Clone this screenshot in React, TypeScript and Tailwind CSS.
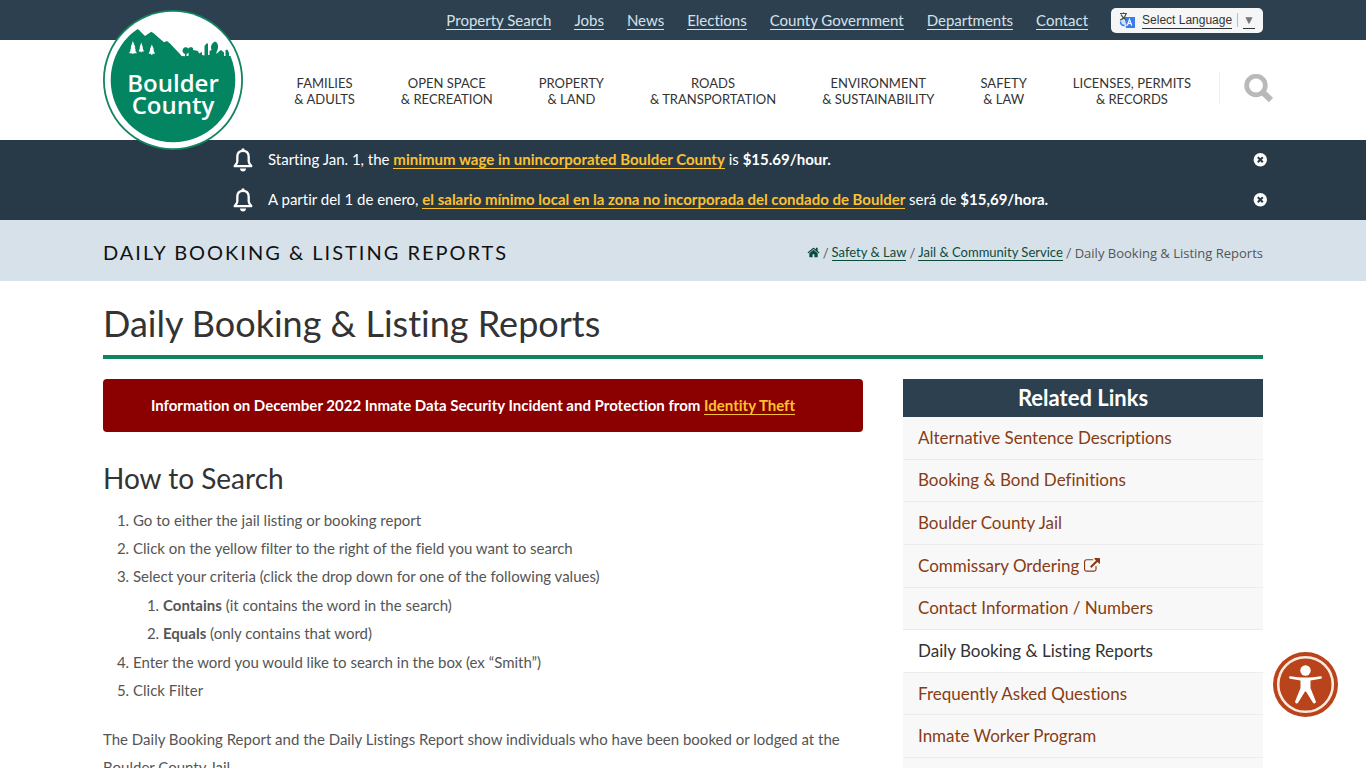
import type { ReactNode } from "react";

const utilityLinks = [
  "Property Search",
  "Jobs",
  "News",
  "Elections",
  "County Government",
  "Departments",
  "Contact",
];

const navItems: [string, string][] = [
  ["Families", "& Adults"],
  ["Open Space", "& Recreation"],
  ["Property", "& Land"],
  ["Roads", "& Transportation"],
  ["Environment", "& Sustainability"],
  ["Safety", "& Law"],
  ["Licenses, Permits", "& Records"],
];

const relatedLinks = [
  { label: "Alternative Sentence Descriptions" },
  { label: "Booking & Bond Definitions" },
  { label: "Boulder County Jail" },
  { label: "Commissary Ordering", external: true },
  { label: "Contact Information / Numbers" },
  { label: "Daily Booking & Listing Reports", current: true },
  { label: "Frequently Asked Questions" },
  { label: "Inmate Worker Program" },
];

function Container({ children, className = "" }: { children: ReactNode; className?: string }) {
  return <div className={`mx-auto w-full max-w-[1160px] ${className}`}>{children}</div>;
}

function Logo() {
  return (
    <svg viewBox="0 0 140 140" className="block size-[140px]" role="img" aria-label="Boulder County">
      <circle cx="70" cy="70" r="70" fill="#128462" />
      <circle cx="70" cy="70" r="68.2" fill="#fff" />
      <clipPath id="seal">
        <circle cx="70" cy="70" r="62.3" />
      </clipPath>
      <g clipPath="url(#seal)">
        <path
          fill="#048562"
          d="M0 40 L16 31 L22 27 L27 23 L29 23 L34.3 19 L36 20 L42 26 L48.3 21.7 L51 23.5 L56 28 L61 32.3 L64 31 L67 33.5 L76.5 43.5 L78.7 46 L82 46.2 L82 44 A3.2 3.4 0 1 1 83.5 44 L83.5 46 L85.5 46 L85.5 38 L88 37 L90 38 L90 40 L95 41 L96 43.5 L99 42 L99 45 L101.5 45.5 L101.5 36 L104 33 L105 34 L105 45 L106.5 45 L106.5 41 L108.5 40 C107 36 109 33 112 31.5 C115.5 33 116 38 113.5 42 L113.5 44 L116.5 41 L118 40 L121 42.5 L121 46 L122.5 46 L122.5 40 L126 39 L126 46 L140 46 L140 140 L0 140 Z"
        />
      </g>
      <g fill="#fff">
        <path d="M29.8 31 L32.4 37.5 L31.5 37.5 L33 40.3 L32 40.3 L34 43.2 L30.4 43.2 L30.4 44 L29.2 44 L29.2 43.2 L26 43.2 L27.8 40.3 L27 40.3 L28.4 37.5 L27.7 37.5 Z" />
        <path d="M38.2 32.5 L40 37.5 L39.4 37.5 L41 41.5 L38.8 41.5 L38.8 42.3 L37.7 42.3 L37.7 41.5 L35.6 41.5 L37.2 37.5 L36.6 37.5 Z" />
        <path d="M48.8 34.5 L51 39.5 L50.2 39.5 L52 43.7 L49.4 43.7 L49.4 45 L48.2 45 L48.2 43.7 L45.6 43.7 L47.4 39.5 L46.8 39.5 Z" />
      </g>
      <g fill="#fff" textAnchor="middle" className="font-['Open_Sans',sans-serif] text-[24px] font-semibold">
        <text x="70" y="82">Boulder</text>
        <text x="70" y="104">County</text>
      </g>
    </svg>
  );
}

function TranslateIcon() {
  return (
    <svg viewBox="0 0 16 16" className="size-4 shrink-0" aria-hidden="true">
      <path d="M5 5h11v11H7z" fill="#3b7ded" />
      <path d="M1 8l4-2 3 8-3 .5C2.500 14.500 1 12 1 8z" fill="#cfe0fb" />
      <path d="M1 1.500h7M4.500.5v1M2 2.500c1 2.500 3 4 5 5M7 2C6 5 4 7 1 8" fill="none" stroke="#4b5340" strokeWidth="1.200" />
      <path d="M1.500 9.500c0 2.500 1.500 4 4 4" fill="none" stroke="#3b7ded" strokeWidth="1.400" />
      <path d="M8.300 13.500l2.200-6 2.200 6M9.200 11.500h2.700" fill="none" stroke="#fff" strokeWidth="1.200" />
    </svg>
  );
}

function SearchIcon() {
  return (
    <svg viewBox="0 0 29 29" className="size-[29px]" aria-hidden="true" fill="none" stroke="#b9b9b9">
      <circle cx="12" cy="11.500" r="9.300" strokeWidth="4.800" />
      <path d="M18.500 18l8.500 8" strokeWidth="6" />
    </svg>
  );
}

function BellIcon() {
  return (
    <svg viewBox="0 0 20 24" className="h-6 w-5 shrink-0" aria-hidden="true">
      <path
        d="M10 2.800C6.300 2.800 4.300 5.300 4.300 9v4.200c0 2-1.300 3-2.600 5h16.600c-1.300-2-2.600-3-2.600-5V9c0-3.700-2-6.200-5.700-6.200z"
        fill="none"
        stroke="#fff"
        strokeWidth="2.300"
        strokeLinejoin="round"
      />
      <circle cx="10" cy="2" r="1.700" fill="#fff" />
      <path d="M7 20.500h6c0 1.800-1.300 3-3 3s-3-1.200-3-3z" fill="#fff" />
    </svg>
  );
}

function CloseIcon() {
  return (
    <svg viewBox="0 0 14 14" className="size-[14px]" aria-hidden="true">
      <circle cx="7.300" cy="6.700" r="6.700" fill="#fff" />
      <path d="M4.800 4.200l5 5M9.800 4.200l-5 5" stroke="#283a47" strokeWidth="2" />
    </svg>
  );
}

function HomeIcon() {
  return (
    <svg viewBox="0 0 1792 1792" className="size-[13px]" aria-hidden="true" fill="currentColor">
      <path d="M1472 992v480q0 26-19 45t-45 19h-384v-384h-256v384h-384q-26 0-45-19t-19-45v-480q0-1 .5-3t.5-3l575-474 575 474q1 2 1 6zm223-69l-62 74q-8 9-21 11h-3q-13 0-21-7l-692-577-692 577q-12 8-24 7-13-2-21-11l-62-74q-8-10-7-23.500t11-21.500l719-599q32-26 76-26t76 26l244 204v-195q0-14 9-23t23-9h192q14 0 23 9t9 23v408l219 182q10 8 11 21.500t-7 23.500z" />
    </svg>
  );
}

function ExternalIcon() {
  return (
    <svg viewBox="0 0 1792 1792" className="size-4" aria-hidden="true" fill="currentColor">
      <path d="M1408 928v320q0 119-84.500 203.500t-203.500 84.500h-832q-119 0-203.500-84.500t-84.500-203.500v-832q0-119 84.500-203.500t203.500-84.500h704q14 0 23 9t9 23v64q0 14-9 23t-23 9h-704q-66 0-113 47t-47 113v832q0 66 47 113t113 47h832q66 0 113-47t47-113v-320q0-14 9-23t23-9h64q14 0 23 9t9 23zm384-864v512q0 26-19 45t-45 19-45-19l-176-176-652 652q-10 10-23 10t-23-10l-114-114q-10-10-10-23t10-23l652-652-176-176q-19-19-19-45t19-45 45-19h512q26 0 45 19t19 45z" />
    </svg>
  );
}

function AccessibilityIcon() {
  return (
    <svg viewBox="0 0 65 65" className="size-[65px]" aria-hidden="true">
      <circle cx="32.500" cy="32.500" r="32.500" fill="#b9431a" />
      <circle cx="32.500" cy="32.500" r="27.300" fill="none" stroke="#fde9df" strokeWidth="2.600" />
      <circle cx="32.500" cy="18.500" r="5.200" fill="#fff" />
      <path
        fill="#fff"
        d="M17.500 24.200c5 .9 9.500 1.200 15 1.200s10-.3 15-1.200c1.700-.2 2 2.100.3 2.500l-10.300 1.800v7.500l5.300 13.300c.7 2-2 3-3 1.200L33 39.500h-1L25.200 50.500c-1 1.800-3.700.8-3-1.200L27.500 36v-7.500l-10.300-1.800c-1.700-.4-1.400-2.700.3-2.500z"
      />
    </svg>
  );
}

function Notice({ children }: { children: ReactNode }) {
  return (
    <div className="flex h-10 items-center">
      <BellIcon />
      <p className="ml-[15px] flex-1 pb-0.5">{children}</p>
      <button type="button" aria-label="Dismiss notice" className="-mr-1">
        <CloseIcon />
      </button>
    </div>
  );
}

function NoticeLink({ children }: { children: ReactNode }) {
  return (
    <a href="#" className="border-b border-[#fdc02f] font-bold text-[#fdc02f]">
      {children}
    </a>
  );
}

export default function App() {
  return (
    <div className="bg-white font-[Lato,sans-serif] text-[15px] leading-5 text-[#555] [font-variant-ligatures:no-common-ligatures]">
      <header className="relative">
        <div className="bg-[#2c404f]">
          <Container className="flex h-10 items-center justify-end gap-[23px]">
            {utilityLinks.map((label) => (
              <a key={label} href="#" className="border-b border-[#d6e1ea] leading-[18px] text-[#d6e1ea]">
                {label}
              </a>
            ))}
            <button
              type="button"
              className="flex h-[25px] items-center rounded-[5px] bg-[#f5f6f7] px-2 font-['Liberation_Sans',Arial,sans-serif] text-xs text-[#333]"
            >
              <TranslateIcon />
              <span className="ml-[7px] border-b border-[#333] leading-4">Select Language</span>
              <span className="mx-[5px] h-3.5 w-px bg-[#bbb]" />
              <span className="border-b border-[#333] leading-4 text-[#777]">▼</span>
            </button>
          </Container>
        </div>
        <Container className="flex h-[100px] items-center justify-end">
          <nav aria-label="Main" className="flex gap-[46px] pt-0.5 text-center text-[13px] leading-4 text-[#333] uppercase">
            {navItems.map(([top, bottom]) => (
              <a key={top} href="#">
                {top}
                <br />
                {bottom}
              </a>
            ))}
          </nav>
          <div className="-mr-2.5 mb-1 ml-7 flex h-8 items-center border-l border-[#eee] pl-6">
            <button type="button" aria-label="Search">
              <SearchIcon />
            </button>
          </div>
        </Container>
        <div className="pointer-events-none absolute inset-x-0 top-2.5">
          <Container>
            <a href="#" className="pointer-events-auto block w-[140px]">
              <Logo />
            </a>
          </Container>
        </div>
      </header>

      <section aria-label="Notices" className="bg-[#283a47] text-white">
        <Container className="pl-[130px]">
          <Notice>
            Starting Jan. 1, the <NoticeLink>minimum wage in unincorporated Boulder County</NoticeLink> is{" "}
            <strong>$15.69/hour.</strong>
          </Notice>
          <Notice>
            A partir del 1 de enero,{" "}
            <NoticeLink>el salario mínimo local en la zona no incorporada del condado de Boulder</NoticeLink> será de{" "}
            <strong>$15,69/hora.</strong>
          </Notice>
        </Container>
      </section>

      <div className="bg-[#d6e1ea]">
        <Container className="flex h-[61px] items-center justify-between pt-0.5">
          <p className="text-xl tracking-[2px] text-[#111] uppercase">Daily Booking &amp; Listing Reports</p>
          <nav aria-label="Breadcrumb" className="flex items-center gap-[3px] pt-0.5 text-[13px] leading-4">
            <a href="#" aria-label="Home" className="text-[#0c4b3b]">
              <HomeIcon />
            </a>
            <span>/</span>
            <a href="#" className="border-b border-[#0c4b3b] text-[#0c4b3b]">
              Safety &amp; Law
            </a>
            <span>/</span>
            <a href="#" className="border-b border-[#0c4b3b] text-[#0c4b3b]">
              Jail &amp; Community Service
            </a>
            <span>/</span>
            <span className="font-['Open_Sans',sans-serif]">Daily Booking &amp; Listing Reports</span>
          </nav>
        </Container>
      </div>

      <Container>
        <h1 className="border-b-4 border-[#12835f] pt-5 pb-[10px] text-4xl leading-[44px] text-[#333]">
          Daily Booking &amp; Listing Reports
        </h1>
        <div className="flex items-start gap-10 pt-5">
          <main className="flex-1">
            <div className="rounded-sm bg-[#8b0000] py-4 pr-9 pl-4 text-center leading-[21px] font-bold text-white">
              Information on December 2022 Inmate Data Security Incident and Protection from{" "}
              <a href="#" className="border-b border-[#fdc02f] text-[#fdc02f]">
                Identity Theft
              </a>
            </div>
            <h2 className="mt-7 mb-2.5 text-[28px] leading-9 text-[#333]">How to Search</h2>
            <ol className="list-decimal pl-[30px] leading-7">
              <li>Go to either the jail listing or booking report</li>
              <li>Click on the yellow filter to the right of the field you want to search</li>
              <li>
                Select your criteria (click the drop down for one of the following values)
                <ol className="list-decimal py-px pl-[30px]">
                  <li>
                    <strong>Contains</strong> (it contains the word in the search)
                  </li>
                  <li>
                    <strong>Equals</strong> (only contains that word)
                  </li>
                </ol>
              </li>
              <li>Enter the word you would like to search in the box (ex “Smith”)</li>
              <li>Click Filter</li>
            </ol>
            <p className="mt-[21px] leading-7">
              The Daily Booking Report and the Daily Listings Report show individuals who have been booked or lodged at
              the Boulder County Jail.
            </p>
          </main>
          <aside className="w-[360px] bg-[#f8f8f8] pb-8">
            <h2 className="bg-[#2c404f] text-center text-[22px] leading-[38px] font-bold text-white">Related Links</h2>
            <ul className="grid h-[341px] auto-rows-fr text-[17px] leading-6">
              {relatedLinks.map(({ label, external, current }) => (
                <li
                  key={label}
                  className={`flex items-center border-b border-[#ececec] px-[15px] ${current ? "bg-white" : ""}`}
                >
                  <a
                    href="#"
                    aria-current={current ? "page" : undefined}
                    className={`flex items-center gap-[5px] ${current ? "text-[#333]" : "text-[#873c14]"}`}
                  >
                    {label}
                    {external && <ExternalIcon />}
                  </a>
                </li>
              ))}
            </ul>
          </aside>
        </div>
      </Container>

      <button type="button" aria-label="Accessibility options" className="fixed right-7 bottom-[51px]">
        <AccessibilityIcon />
      </button>
    </div>
  );
}
